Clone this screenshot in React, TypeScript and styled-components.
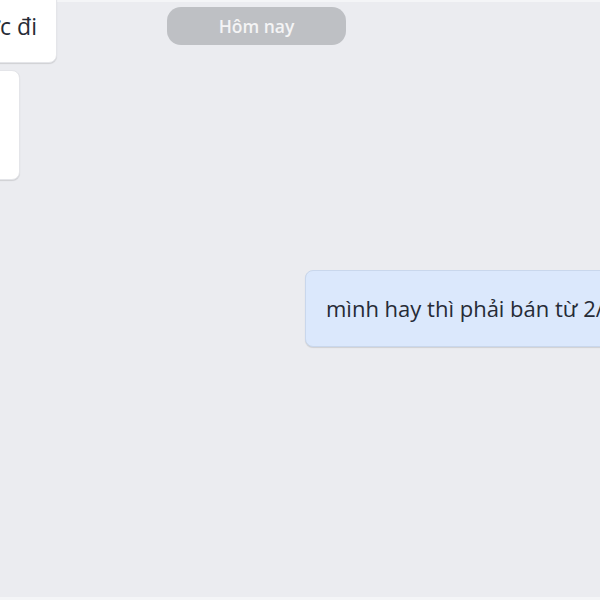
import React from 'react';
import styled, { createGlobalStyle } from 'styled-components';

const GlobalStyle = createGlobalStyle`
  html, body {
    margin: 0;
    padding: 0;
    background: #f4f5f7;
  }
  body {
    font-family: 'Open Sans', 'Noto Sans', 'Liberation Sans', sans-serif;
  }
`;

const Frame = styled.div`
  width: 600px;
  height: 600px;
  overflow: hidden;
  background: #f4f5f7;
  display: flex;
`;

const Pane = styled.main`
  flex: 1;
  margin: 2px 3px 3px 0;
  background: #ebecf0;
  display: flex;
  flex-direction: column;
`;

const TopRow = styled.div`
  display: flex;
  align-items: flex-start;
  margin-top: -2px;
`;

interface BubbleProps {
  $mine?: boolean;
}

const Bubble = styled.div<BubbleProps>`
  box-sizing: border-box;
  background: ${({ $mine }) => ($mine ? '#dbe8fc' : '#ffffff')};
  border: 1px solid ${({ $mine }) => ($mine ? '#c9d7ec' : '#e4e5e9')};
  border-radius: 8px;
  box-shadow: 0 1px 1px rgba(0, 0, 0, 0.12);
  color: #262b36;
  font-size: 21.5px;
  line-height: 28px;
  white-space: nowrap;
`;

const OldBubble = styled(Bubble)`
  width: 180px;
  margin-left: -123px;
  margin-top: -20px;
  padding: 31px 19px 22px 0;
  text-align: right;
  font-size: 23px;
`;

const CardBubble = styled(Bubble)`
  width: 120px;
  height: 110px;
  margin-left: -100px;
  margin-top: 7px;
`;

const DatePill = styled.div`
  margin: 7px 0 0 110px;
  width: 179px;
  height: 38px;
  border-radius: 14px;
  background: #bec0c4;
  color: #f4f4f5;
  font-size: 17.5px;
  font-weight: 600;
  display: flex;
  align-items: center;
  justify-content: center;
`;

const MineBubble = styled(Bubble)`
  align-self: flex-start;
  margin-left: 305px;
  margin-top: 90px;
  padding: 23px 20px 24px;
  font-size: 22px;
`;

export default function App() {
  return (
    <>
      <GlobalStyle />
      <Frame>
        <Pane>
          <TopRow>
            <OldBubble>trước đi</OldBubble>
            <DatePill>Hôm nay</DatePill>
          </TopRow>
          <CardBubble />
          <MineBubble $mine>mình hay thì phải bán từ 2/3 ngày trước</MineBubble>
        </Pane>
      </Frame>
    </>
  );
}
